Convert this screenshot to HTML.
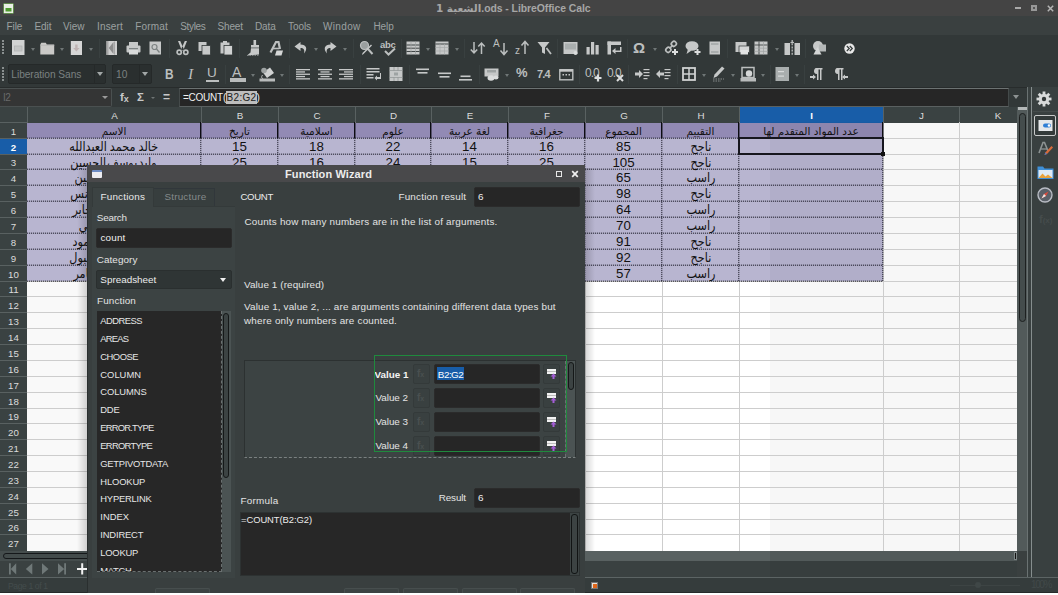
<!DOCTYPE html><html><head><meta charset="utf-8"><title>Function Wizard</title><style>
*{box-sizing:border-box;margin:0;padding:0}
html,body{width:1058px;height:595px;overflow:hidden;background:#fff}
body{font-family:"Liberation Sans","DejaVu Sans",sans-serif;font-size:10.3px;color:#d6d6d6;position:relative}
.a{position:absolute}
.t{position:absolute;white-space:nowrap;line-height:14px;height:14px}
.ar{font-family:"DejaVu Sans","Liberation Sans",sans-serif;direction:rtl}
.cell{position:absolute;white-space:nowrap;text-align:center;color:#111;line-height:16px;height:16px;overflow:hidden}
.num{font-family:"Liberation Sans",sans-serif;font-size:13.3px}
.ch{position:absolute;top:107px;height:16px;line-height:17px;text-align:center;color:#dcdcdc;font-size:9.8px;border-left:1px solid #596161}
.rh{position:absolute;left:0;width:27px;text-align:center;color:#dcdcdc;font-size:9.7px;border-top:1px solid #596161}
.dd{position:absolute;width:0;height:0;border-left:2.5px solid transparent;border-right:2.5px solid transparent;border-top:3px solid #8a8f8f}
.inp{position:absolute;background:#262626;border:1px solid #2b2b2b;border-radius:2px}
</style></head><body>
<div class="a" style="left:0;top:0;width:1058px;height:16px;background:#444444"></div>
<div class="t" style="left:436px;top:1px;font-weight:bold;font-size:10.4px;color:#a6a6a6;direction:ltr;letter-spacing:-0.05px"><span class="ar" style="direction:ltr">1 &#x627;&#x644;&#x634;&#x639;&#x628;&#x629;</span>.ods - LibreOffice Calc</div>
<svg class="a" style="left:3px;top:3px" width="11" height="11" viewBox="0 0 11 11"><rect x="0.5" y="0.5" width="10" height="10" rx="1" fill="#e8efe4" stroke="#5f8a4a"/><rect x="2.5" y="5" width="6" height="3.5" fill="#4e9a2e"/></svg>
<div class="a" style="left:1015px;top:7px;width:6px;height:2px;background:#a8a8a8"></div>
<div class="a" style="left:1031px;top:5px;width:6px;height:6px;border:2px solid #989898;background:#555"></div>
<svg class="a" style="left:1046.500px;top:4.500px" width="7" height="7" viewBox="0 0 7 7"><path d="M0.800 0.800L6.200 6.200M6.200 0.800L0.800 6.200" stroke="#b4b4b4" stroke-width="1.500"/></svg>
<div class="a" style="left:0;top:16px;width:1058px;height:20px;background:#3a4040"></div>
<div class="t" style="left:6.5px;top:19.93px;color:#9ca1a1;font-size:10px;letter-spacing:-0.08px;">File</div>
<div class="t" style="left:34.5px;top:19.93px;color:#9ca1a1;font-size:10px;letter-spacing:-0.06px;">Edit</div>
<div class="t" style="left:63px;top:19.93px;color:#9ca1a1;font-size:10px;letter-spacing:0.00px;">View</div>
<div class="t" style="left:97px;top:19.93px;color:#9ca1a1;font-size:10px;letter-spacing:0.16px;">Insert</div>
<div class="t" style="left:135.3px;top:19.93px;color:#9ca1a1;font-size:10px;letter-spacing:0.17px;">Format</div>
<div class="t" style="left:180.3px;top:19.93px;color:#9ca1a1;font-size:10px;letter-spacing:-0.36px;">Styles</div>
<div class="t" style="left:217.4px;top:19.93px;color:#9ca1a1;font-size:10px;letter-spacing:-0.11px;">Sheet</div>
<div class="t" style="left:255px;top:19.93px;color:#9ca1a1;font-size:10px;letter-spacing:-0.13px;">Data</div>
<div class="t" style="left:288px;top:19.93px;color:#9ca1a1;font-size:10px;letter-spacing:-0.07px;">Tools</div>
<div class="t" style="left:323px;top:19.93px;color:#9ca1a1;font-size:10px;letter-spacing:0.35px;">Window</div>
<div class="t" style="left:373.4px;top:19.93px;color:#9ca1a1;font-size:10px;letter-spacing:-0.04px;">Help</div>
<div class="a" style="left:0;top:35px;width:1058px;height:53px;background:#323838"></div>
<div class="a" style="left:0;top:87px;width:1058px;height:20px;background:#323838;border-top:1px solid #282c2c"></div>
<div class="a" style="left:2px;top:40px;width:2px;height:15px;background:repeating-linear-gradient(180deg,#8a9090 0 2px,transparent 2px 3px)"></div>
<div class="a" style="left:2px;top:67px;width:2px;height:15px;background:repeating-linear-gradient(180deg,#8a9090 0 2px,transparent 2px 3px)"></div>
<svg class="a" style="left:12px;top:40px" width="13" height="16" viewBox="0 0 13 16" fill="#c6c8c8"><rect x="0" y="0" width="12.500" height="15" fill="#d2d4d4"/><rect x="2.500" y="6" width="7.500" height="5" fill="#c4c6c6" stroke="#b2b5b5" stroke-width="0.800"/></svg>
<div class="dd" style="left:30.5px;top:48px;border-top-color:#6f7676"></div>
<svg class="a" style="left:40px;top:40px" width="15" height="16" viewBox="0 0 15 16" fill="#c6c8c8"><path d="M0.300 4.500l1-1.700h4.500l1 1.700h7.400v10H0.300z" fill="#cac9c7"/><path d="M0.300 5.300h14" stroke="#b4b3b1" stroke-width="0.700"/></svg>
<div class="dd" style="left:59.5px;top:48px;border-top-color:#6f7676"></div>
<svg class="a" style="left:70px;top:40px" width="13" height="16" viewBox="0 0 13 16" fill="#c6c8c8"><rect x="0.800" y="1" width="11.200" height="14" fill="#d6d6d6"/><path d="M5.200 4.500h2.400v3.500h2L6.400 11.500 3.200 8h2z" fill="#beb2b2"/></svg>
<div class="dd" style="left:88.5px;top:48px;border-top-color:#6f7676"></div>
<div class="a" style="left:99px;top:39px;width:1px;height:19px;background:#394040"></div>
<svg class="a" style="left:105px;top:40px" width="13" height="16" viewBox="0 0 13 16" fill="#c6c8c8"><rect x="1.500" y="1" width="10.500" height="14" fill="#d0d0d0"/><path d="M1.500 1h2v14h-2z" fill="#a8a8a8"/><path d="M8.500 2L3.800 8l4.700 6z" fill="#8d8d8d"/><path d="M9.500 1.500v13" stroke="#9a9a9a" stroke-width="0.800"/></svg>
<svg class="a" style="left:126px;top:40px" width="15" height="16" viewBox="0 0 15 16" fill="#c6c8c8"><rect x="3" y="2" width="9" height="4"/><rect x="0.500" y="5.500" width="14" height="7" rx="1"/><rect x="3" y="10" width="9" height="4.500" fill="#d8dada"/><rect x="3" y="8" width="9" height="1.200" fill="#7d8383"/></svg>
<svg class="a" style="left:149px;top:40px" width="13" height="16" viewBox="0 0 13 16" fill="#c6c8c8"><rect x="0.500" y="1.500" width="11.500" height="13"/><circle cx="5.500" cy="7" r="2.500" fill="none" stroke="#7d8383" stroke-width="1.200"/><path d="M7.500 9l3 3.500" stroke="#7d8383" stroke-width="1.300"/></svg>
<div class="a" style="left:169px;top:39px;width:1px;height:19px;background:#394040"></div>
<svg class="a" style="left:176px;top:40px" width="13" height="16" viewBox="0 0 13 16" fill="#c6c8c8"><path d="M2 1h2.200L8 9.500 6 11zM11 1H8.800L5 9.500 7 11z"/><circle cx="3.200" cy="12.200" r="2.100" fill="none" stroke="#bcbfbf" stroke-width="1.700"/><circle cx="9.800" cy="12.200" r="2.100" fill="none" stroke="#bcbfbf" stroke-width="1.700"/></svg>
<svg class="a" style="left:198px;top:40px" width="13" height="16" viewBox="0 0 13 16" fill="#c6c8c8"><rect x="0.500" y="2" width="8" height="9"/><rect x="4" y="5.500" width="8.500" height="9.500" stroke="#323838" stroke-width="0.800"/></svg>
<svg class="a" style="left:220px;top:40px" width="13" height="16" viewBox="0 0 13 16" fill="#c6c8c8"><rect x="0.500" y="2.500" width="9" height="11"/><rect x="3" y="1" width="4" height="2.500"/><rect x="4" y="5.500" width="8.500" height="9.500" stroke="#323838" stroke-width="0.800" fill="#d0d2d2"/></svg>
<div class="a" style="left:239px;top:39px;width:1px;height:19px;background:#394040"></div>
<svg class="a" style="left:246px;top:40px" width="14" height="16" viewBox="0 0 14 16" fill="#c6c8c8"><rect x="7.500" y="0" width="2.600" height="5.500"/><rect x="5" y="5" width="8" height="2.600"/><path d="M5 8.200h8v6.300l-12 1 3.500-3z"/><path d="M1 15.500h12" stroke="#8a8f8f" stroke-width="0.800" stroke-dasharray="1.500 1"/></svg>
<svg class="a" style="left:268px;top:40px" width="16" height="16" viewBox="0 0 16 16" fill="#c6c8c8"><path d="M2.500 12.500L8 2h2.500l1.500 7" stroke="#bcbfbf" stroke-width="2.200" fill="none"/><path d="M5 8.500h6" stroke="#bcbfbf" stroke-width="1.600"/><path d="M8.500 10.500h6.500l-1.500 5H7z" fill="#d4d6d6"/></svg>
<div class="a" style="left:289px;top:39px;width:1px;height:19px;background:#394040"></div>
<svg class="a" style="left:294px;top:40px" width="14" height="16" viewBox="0 0 14 16" fill="#c6c8c8"><path d="M6.500 2L0.500 6.500l6 4.500V8c3 0 4.500 1.500 3.500 5.500 4-4.500 2.500-9-3.500-9z"/></svg>
<div class="dd" style="left:313.5px;top:48px;border-top-color:#6f7676"></div>
<svg class="a" style="left:323px;top:40px" width="14" height="16" viewBox="0 0 14 16" fill="#c6c8c8"><path d="M7.500 2l6 4.500-6 4.500V8c-3 0-4.500 1.500-3.500 5.500-4-4.500-2.500-9 3.500-9z"/></svg>
<div class="dd" style="left:342.5px;top:48px;border-top-color:#6f7676"></div>
<div class="a" style="left:353px;top:39px;width:1px;height:19px;background:#394040"></div>
<svg class="a" style="left:359px;top:40px" width="16" height="16" viewBox="0 0 16 16" fill="#c6c8c8"><circle cx="5.500" cy="5.500" r="4" fill="#9a9f9f" stroke="#bcbfbf" stroke-width="1.200"/><path d="M8.500 8.500l5 5.500" stroke="#bcbfbf" stroke-width="2"/><path d="M13 5.500L4.500 14l-1.500 1 0.500-2L12 4.500z"/></svg>
<div class="t" style="left:380px;top:38px;font-size:9.5px;font-weight:bold;color:#bcbfbf;letter-spacing:-0.3px">abc</div>
<svg class="a" style="left:384px;top:48px" width="12" height="8" viewBox="0 0 12 8" fill="#c6c8c8"><path d="M1 3l3.500 3.500L11 0.500" stroke="#bcbfbf" stroke-width="2" fill="none"/></svg>
<div class="a" style="left:401px;top:39px;width:1px;height:19px;background:#394040"></div>
<svg class="a" style="left:406px;top:40px" width="14" height="16" viewBox="0 0 14 16" fill="#c6c8c8"><rect x="0.500" y="1.500" width="13" height="13"/><path d="M0.500 5h13M0.500 8.200h13M0.500 11.500h13" stroke="#323838" stroke-width="0.900"/><path d="M5 1.500v13M9.500 1.500v13" stroke="#9da2a2" stroke-width="0.700"/></svg>
<div class="dd" style="left:425.5px;top:48px;border-top-color:#6f7676"></div>
<svg class="a" style="left:435px;top:40px" width="14" height="16" viewBox="0 0 14 16" fill="#c6c8c8"><rect x="0.500" y="1.500" width="13" height="13"/><path d="M0.500 4h13" stroke="#323838" stroke-width="0.900"/><path d="M5 4v10.500M9.500 4v10.500M0.500 7.500h13M0.500 11h13" stroke="#a6abab" stroke-width="0.700"/></svg>
<div class="dd" style="left:454.5px;top:48px;border-top-color:#6f7676"></div>
<div class="a" style="left:464px;top:39px;width:1px;height:19px;background:#394040"></div>
<svg class="a" style="left:470px;top:40px" width="16" height="16" viewBox="0 0 16 16" fill="#c6c8c8"><path d="M4 2v11M0.800 9.500L4 13l3.200-3.500M11.500 14V3M8.300 6.500L11.500 3l3.200 3.500" stroke="#bcbfbf" stroke-width="1.500" fill="none"/></svg>
<div class="t" style="left:493px;top:37px;font-size:10px;color:#bcbfbf">A</div>
<svg class="a" style="left:499px;top:42px" width="10" height="14" viewBox="0 0 10 14" fill="#c6c8c8"><path d="M5 1v11M1.500 8.500L5 12.500l3.500-4" stroke="#bcbfbf" stroke-width="1.500" fill="none"/></svg>
<div class="t" style="left:515px;top:44px;font-size:10px;color:#bcbfbf">z</div>
<svg class="a" style="left:520px;top:40px" width="10" height="15" viewBox="0 0 10 15" fill="#c6c8c8"><path d="M5 14V2M1.500 5.500L5 1.500l3.500 4" stroke="#bcbfbf" stroke-width="1.500" fill="none"/></svg>
<svg class="a" style="left:537px;top:40px" width="15" height="16" viewBox="0 0 15 16" fill="#c6c8c8"><path d="M0.500 2h12l-4.500 5.500V14l-3-1.500V7.500z"/><path d="M9.500 8l4.500 6" stroke="#bcbfbf" stroke-width="1.800"/></svg>
<div class="a" style="left:557px;top:39px;width:1px;height:19px;background:#394040"></div>
<svg class="a" style="left:563px;top:40px" width="15" height="16" viewBox="0 0 15 16" fill="#c6c8c8"><rect x="0.500" y="2" width="14" height="12"/><rect x="2" y="3.500" width="11" height="6" fill="#a9aeae"/><circle cx="12.500" cy="13" r="2" fill="#dadcdc"/></svg>
<svg class="a" style="left:586px;top:40px" width="14" height="16" viewBox="0 0 14 16" fill="#c6c8c8"><rect x="0.500" y="7" width="3.200" height="7.500"/><rect x="5" y="2" width="3.200" height="12.500"/><rect x="9.500" y="5" width="3.200" height="9.500"/></svg>
<svg class="a" style="left:607px;top:40px" width="15" height="16" viewBox="0 0 15 16" fill="#c6c8c8"><rect x="0.500" y="1.500" width="13.500" height="3.500"/><rect x="0.500" y="1.500" width="3.500" height="13"/><path d="M13 7v3.500H8.500V8L5 11l3.500 3v-2h6V7z"/></svg>
<div class="a" style="left:627px;top:39px;width:1px;height:19px;background:#394040"></div>
<div class="t" style="left:633px;top:39px;font-size:15px;font-weight:bold;color:#bcbfbf;line-height:18px;height:18px">&Omega;</div>
<div class="dd" style="left:652.5px;top:48px;border-top-color:#6f7676"></div>
<svg class="a" style="left:664px;top:40px" width="16" height="16" viewBox="0 0 16 16" fill="#c6c8c8"><g fill="none" stroke="#bcbfbf" stroke-width="1.700"><rect x="7.500" y="1.500" width="5" height="4.500" rx="2" transform="rotate(-45 10 4)"/><rect x="2" y="7.500" width="5" height="4.500" rx="2" transform="rotate(-45 4.500 10)"/><path d="M5.500 8.500l3.500-3.500"/></g><path d="M11 9v6M8 12h6" stroke="#dcdede" stroke-width="2"/></svg>
<svg class="a" style="left:685px;top:40px" width="16" height="16" viewBox="0 0 16 16" fill="#c6c8c8"><ellipse cx="7" cy="6" rx="6.500" ry="4.800"/><path d="M3 9l-1.500 5 5-3.500z"/><path d="M12.500 9v6M9.500 12h6" stroke="#dcdede" stroke-width="2"/></svg>
<svg class="a" style="left:709px;top:40px" width="12" height="16" viewBox="0 0 12 16" fill="#c6c8c8"><rect x="0.500" y="1.500" width="10.500" height="13"/><path d="M2 4h7.500M2 12h7.500" stroke="#8e9393" stroke-width="1.200"/></svg>
<div class="a" style="left:727px;top:39px;width:1px;height:19px;background:#394040"></div>
<svg class="a" style="left:735px;top:40px" width="15" height="16" viewBox="0 0 15 16" fill="#c6c8c8"><rect x="0.500" y="2" width="11" height="10"/><rect x="4" y="6" width="10.500" height="6.500" fill="#d4d6d6" stroke="#323838" stroke-width="0.700"/><rect x="5.500" y="10" width="7.500" height="4.500" fill="#e2e4e4"/></svg>
<svg class="a" style="left:754px;top:40px" width="14" height="16" viewBox="0 0 14 16" fill="#c6c8c8"><rect x="0.500" y="1.500" width="13" height="13"/><path d="M0.500 5h13M5 1.500v13" stroke="#323838" stroke-width="0.800"/><path d="M0.500 8.200h13M0.500 11.400h13M9.500 1.500v13" stroke="#9da2a2" stroke-width="0.700"/></svg>
<div class="dd" style="left:774.5px;top:48px;border-top-color:#6f7676"></div>
<svg class="a" style="left:784px;top:39px" width="17" height="17" viewBox="0 0 17 17" fill="#c6c8c8"><rect x="0.500" y="4" width="5.500" height="12"/><rect x="10.500" y="4" width="5.500" height="12"/><path d="M8.200 1v16" stroke="#bcbfbf" stroke-width="1.300" stroke-dasharray="2 1.200"/><path d="M6.500 3.500h3.500" stroke="#bcbfbf" stroke-width="1.200"/></svg>
<div class="a" style="left:805px;top:39px;width:1px;height:19px;background:#394040"></div>
<svg class="a" style="left:812px;top:40px" width="15" height="16" viewBox="0 0 15 16" fill="#c6c8c8"><circle cx="6" cy="6" r="5"/><rect x="7" y="4.500" width="7" height="7" fill="#b4b8b8"/><path d="M5.500 7l4 7.500h-8z" fill="#d4d6d6"/></svg>
<svg class="a" style="left:844px;top:43px" width="11" height="11" viewBox="0 0 11 11" fill="#c6c8c8"><circle cx="5.500" cy="5.500" r="5.200" fill="#e8e8e8"/><path d="M2.800 3l2.500 2.500L2.800 8M5.800 3l2.500 2.500L5.800 8" stroke="#323838" stroke-width="1.200" fill="none"/></svg>
<div class="a" style="left:8px;top:64px;width:98px;height:20px;background:#2a2f2f;border:1px solid #252929;border-radius:2px"></div>
<div class="a" style="left:94px;top:65px;width:1px;height:18px;background:#252929"></div>
<div class="t" style="left:11.300px;top:67.500px;color:#7b8181;font-size:10.200px;letter-spacing:-0.050px">Liberation Sans</div>
<div class="dd" style="left:96.500px;top:72px;border-left-width:3.500px;border-right-width:3.500px;border-top-width:4px;border-top-color:#a2a7a7"></div>
<div class="a" style="left:112px;top:64px;width:40px;height:20px;background:#2a2f2f;border:1px solid #252929;border-radius:2px"></div>
<div class="a" style="left:139px;top:65px;width:1px;height:18px;background:#252929"></div>
<div class="t" style="left:116px;top:67.500px;color:#7b8181;font-size:10.200px">10</div>
<div class="dd" style="left:141.500px;top:72px;border-left-width:3.500px;border-right-width:3.500px;border-top-width:4px;border-top-color:#a2a7a7"></div>
<div class="t" style="left:165px;top:64.500px;font-size:14.500px;font-weight:bold;color:#bcbfbf;line-height:18px;height:18px;transform:scaleX(0.82);transform-origin:0 0">B</div>
<div class="t" style="left:188px;top:64.500px;font-size:15.500px;font-style:italic;font-family:'Liberation Serif',serif;color:#bcbfbf;line-height:18px;height:18px">I</div>
<div class="t" style="left:207px;top:64px;font-size:13.500px;color:#bcbfbf;line-height:18px;height:18px">U</div>
<div class="a" style="left:206px;top:80px;width:13px;height:1.500px;background:#bcbfbf"></div>
<div class="a" style="left:225px;top:65px;width:1px;height:19px;background:#394040"></div>
<div class="t" style="left:232px;top:63px;font-size:14px;color:#bcbfbf;line-height:18px;height:18px">A</div>
<div class="a" style="left:230px;top:78px;width:16px;height:3.500px;background:#b9bcbc"></div>
<div class="dd" style="left:250.5px;top:74px;border-top-color:#6f7676"></div>
<svg class="a" style="left:259px;top:66px" width="17" height="16" viewBox="0 0 17 16" fill="#c6c8c8"><path d="M4 6.500l7-5 4 5.500-7 5z" fill="#d0d2d2"/><circle cx="5" cy="4.500" r="2.800" fill="#9ea3a3"/><path d="M3.500 9c-1.500 2-1 3.500 0.500 3.500" fill="none" stroke="#bcbfbf"/><rect x="0.500" y="12.500" width="15.500" height="3" fill="#b9bcbc"/></svg>
<div class="dd" style="left:280.0px;top:74px;border-top-color:#6f7676"></div>
<div class="a" style="left:289px;top:65px;width:1px;height:19px;background:#394040"></div>
<svg class="a" style="left:296px;top:69px" width="14" height="11.5" viewBox="0 0 14 11.5" fill="#c6c8c8"><rect x="0" y="0.0" width="14" height="1.3"/><rect x="0" y="2.3" width="9" height="1.3"/><rect x="0" y="4.6" width="14" height="1.3"/><rect x="0" y="6.8999999999999995" width="9" height="1.3"/><rect x="0" y="9.2" width="14" height="1.3"/></svg>
<svg class="a" style="left:318px;top:69px" width="14" height="11.5" viewBox="0 0 14 11.5" fill="#c6c8c8"><rect x="0.0" y="0.0" width="14" height="1.3"/><rect x="2.5" y="2.3" width="9" height="1.3"/><rect x="0.0" y="4.6" width="14" height="1.3"/><rect x="2.5" y="6.8999999999999995" width="9" height="1.3"/><rect x="0.0" y="9.2" width="14" height="1.3"/></svg>
<svg class="a" style="left:339px;top:69px" width="14" height="11.5" viewBox="0 0 14 11.5" fill="#c6c8c8"><rect x="0" y="0.0" width="14" height="1.3"/><rect x="5" y="2.3" width="9" height="1.3"/><rect x="0" y="4.6" width="14" height="1.3"/><rect x="5" y="6.8999999999999995" width="9" height="1.3"/><rect x="0" y="9.2" width="14" height="1.3"/></svg>
<div class="a" style="left:360px;top:65px;width:1px;height:19px;background:#394040"></div>
<svg class="a" style="left:366px;top:67px" width="15" height="14" viewBox="0 0 15 14" fill="#c6c8c8"><rect x="0.500" y="1" width="13" height="1.500"/><rect x="0.500" y="4" width="13" height="1.500"/><rect x="0.500" y="7" width="7" height="1.500"/><rect x="0.500" y="10" width="7" height="1.500"/><path d="M14 6v4h-3V8.500L8.500 11l2.500 2.500V12h4.500V6z"/></svg>
<svg class="a" style="left:389px;top:66px" width="14" height="16" viewBox="0 0 14 16" fill="#c6c8c8"><rect x="0.500" y="1" width="13" height="14"/><path d="M0.500 4.500h13M0.500 11.500h13M5 1v3.500M9 1v3.500M5 11.500V15M9 11.500V15" stroke="#8e9393" stroke-width="0.700"/><rect x="5" y="6.500" width="4" height="3" fill="#9ea3a3"/></svg>
<div class="a" style="left:409px;top:65px;width:1px;height:19px;background:#394040"></div>
<svg class="a" style="left:416px;top:68px" width="14" height="8" viewBox="0 0 14 8" fill="#c6c8c8"><rect x="0" y="0.500" width="13" height="1.600"/><rect x="1.500" y="4" width="10" height="1.600"/></svg>
<svg class="a" style="left:438px;top:72px" width="14" height="8" viewBox="0 0 14 8" fill="#c6c8c8"><rect x="0" y="0.500" width="13" height="1.600"/><rect x="1.500" y="4" width="10" height="1.600"/></svg>
<svg class="a" style="left:459px;top:75px" width="14" height="8" viewBox="0 0 14 8" fill="#c6c8c8"><rect x="1.500" y="0.500" width="10" height="1.600"/><rect x="0" y="4" width="13" height="1.600"/></svg>
<div class="a" style="left:479px;top:65px;width:1px;height:19px;background:#394040"></div>
<svg class="a" style="left:484px;top:66px" width="16" height="16" viewBox="0 0 16 16" fill="#c6c8c8"><rect x="0.500" y="2.500" width="14" height="8"/><rect x="3" y="4" width="9" height="2.500" fill="#9ea3a3"/><ellipse cx="7" cy="12" rx="3.500" ry="2.800" fill="#dadcdc"/><ellipse cx="12" cy="11.500" rx="2.500" ry="2" fill="#dadcdc"/></svg>
<div class="dd" style="left:504.5px;top:74px;border-top-color:#6f7676"></div>
<div class="t" style="left:516px;top:64px;font-size:13px;font-weight:bold;color:#bcbfbf;line-height:18px;height:18px;letter-spacing:-0.500px">%</div>
<div class="t" style="left:537px;top:65px;font-size:11px;font-weight:bold;color:#bcbfbf;line-height:18px;height:18px;letter-spacing:-0.800px">7.4</div>
<svg class="a" style="left:559px;top:68px" width="15" height="13" viewBox="0 0 15 13" fill="#c6c8c8"><rect x="0.800" y="1.800" width="13" height="10" fill="none" stroke="#bcbfbf" stroke-width="1.400"/><rect x="0.800" y="1.200" width="13" height="2.500"/><rect x="3.500" y="6" width="1.500" height="1.500"/><rect x="6.500" y="6" width="1.500" height="1.500"/><rect x="9.500" y="6" width="1.500" height="1.500"/></svg>
<div class="a" style="left:579px;top:65px;width:1px;height:19px;background:#394040"></div>
<div class="t" style="left:585px;top:64px;font-size:12px;color:#bcbfbf;line-height:18px;height:18px;letter-spacing:-1px">0.0</div>
<svg class="a" style="left:594px;top:74px" width="8" height="8" viewBox="0 0 8 8" fill="#c6c8c8"><path d="M4 0.500v7M0.500 4h7" stroke="#dcdede" stroke-width="2.200"/></svg>
<div class="t" style="left:607px;top:64px;font-size:12px;color:#bcbfbf;line-height:18px;height:18px;letter-spacing:-1px">0.0</div>
<svg class="a" style="left:616px;top:74px" width="8" height="8" viewBox="0 0 8 8" fill="#c6c8c8"><path d="M1 1l6 6M7 1L1 7" stroke="#dcdede" stroke-width="2"/></svg>
<div class="a" style="left:628px;top:65px;width:1px;height:19px;background:#394040"></div>
<svg class="a" style="left:635px;top:68px" width="15" height="12" viewBox="0 0 15 12" fill="#c6c8c8"><path d="M0 4.500h4V2l4 4-4 4V7.500H0z"/><rect x="8.500" y="1" width="6" height="1.200"/><rect x="8.500" y="4" width="6" height="1.200"/><rect x="8.500" y="7" width="6" height="1.200"/><rect x="8.500" y="10" width="4" height="1.200"/></svg>
<svg class="a" style="left:656px;top:68px" width="15" height="12" viewBox="0 0 15 12" fill="#c6c8c8"><path d="M8 4.500H4V2L0 6l4 4V7.500h4z"/><rect x="8.500" y="1" width="6" height="1.200"/><rect x="8.500" y="4" width="6" height="1.200"/><rect x="8.500" y="7" width="6" height="1.200"/><rect x="8.500" y="10" width="4" height="1.200"/></svg>
<div class="a" style="left:677px;top:65px;width:1px;height:19px;background:#394040"></div>
<svg class="a" style="left:682px;top:67px" width="14" height="14" viewBox="0 0 14 14" fill="#c6c8c8"><rect x="1" y="1" width="12" height="12" fill="none" stroke="#d0d2d2" stroke-width="1.800"/><path d="M7 1v12M1 7h12" stroke="#d0d2d2" stroke-width="1.500"/></svg>
<div class="dd" style="left:701.5px;top:74px;border-top-color:#6f7676"></div>
<svg class="a" style="left:712px;top:66px" width="13" height="16" viewBox="0 0 13 16" fill="#c6c8c8"><path d="M10 0.500l2.500 2L5 10.500l-3.500 1.500 1-3.500z"/><path d="M1 13h11M1 15h8" stroke="#9ea3a3" stroke-width="0.800" stroke-dasharray="1.500 1"/></svg>
<div class="dd" style="left:731.0px;top:74px;border-top-color:#6f7676"></div>
<svg class="a" style="left:740px;top:66px" width="16" height="16" viewBox="0 0 16 16" fill="#c6c8c8"><rect x="2" y="1.500" width="12" height="10" fill="none" stroke="#bcbfbf" stroke-width="1.500"/><circle cx="9" cy="7.500" r="3.200" fill="#d4d6d6"/><rect x="0.500" y="12" width="15.500" height="3.500" fill="#b9bcbc"/></svg>
<div class="dd" style="left:760.5px;top:74px;border-top-color:#6f7676"></div>
<div class="a" style="left:770px;top:65px;width:1px;height:19px;background:#394040"></div>
<svg class="a" style="left:775px;top:66px" width="14" height="16" viewBox="0 0 14 16" fill="#c6c8c8"><rect x="0.500" y="1" width="13.500" height="14" fill="#a9aeae"/><rect x="3" y="5" width="6" height="1.200" fill="#d8dada"/><rect x="3" y="9.500" width="6" height="1.200" fill="#d8dada"/></svg>
<div class="dd" style="left:794.5px;top:74px;border-top-color:#6f7676"></div>
<div class="a" style="left:804px;top:65px;width:1px;height:19px;background:#394040"></div>
<svg class="a" style="left:810px;top:67px" width="13" height="14" viewBox="0 0 13 14" fill="#c6c8c8"><path d="M6 1h6.500v1.500H11.500V13H10V2.500H8.500V13H7V7C4.500 7 4 5.500 4 4s1-3 2-3z"/><path d="M0 9h3V7.500L6 10l-3 2.500V11H0z"/></svg>
<svg class="a" style="left:834px;top:67px" width="14" height="14" viewBox="0 0 14 14" fill="#c6c8c8"><path d="M3 1h6.500v1.500H8.500V13H7V2.500H5.500V13H4V7C1.500 7 1 5.500 1 4s1-3 2-3z"/><path d="M14 9h-3V7.500L8 10l3 2.500V11h3z"/></svg>
<div class="a" style="left:0;top:88px;width:112px;height:19px;background:#343535;border:1px solid #4a5050;border-left:none;border-radius:0 2px 2px 0"></div>
<div class="t" style="left:3px;top:91.03px;color:#6a6a6a;font-size:10px;letter-spacing:-0.42px;">I2</div>
<div class="dd" style="left:101.5px;top:96px;border-left-width:3px;border-right-width:3px;border-top-width:3.5px;border-top-color:#9a9a9a"></div>
<div class="t" style="left:120px;top:90px;color:#c8c8c8;font-weight:bold;font-size:11.5px">f<span style="font-size:9px;vertical-align:-1px">x</span></div>
<div class="t" style="left:137px;top:90px;color:#c8c8c8;font-weight:bold;font-size:11.5px">&Sigma;</div>
<div class="dd" style="left:151px;top:97px;border-left-width:2px;border-right-width:2px;border-top-width:2.5px;border-top-color:#6f7575"></div>
<div class="t" style="left:163px;top:90px;color:#c8c8c8;font-weight:bold;font-size:12px">=</div>
<div class="a" style="left:179px;top:88px;width:830px;height:19px;background:#262626;border:1px solid #444a4a;border-top-color:#6c7272;border-bottom-color:#5a6060"></div>
<div class="a" style="left:226px;top:91px;width:31px;height:13px;background:#bdbdbd"></div>
<div class="t" style="left:183px;top:91.03px;color:#f0f0f0;font-size:10px;letter-spacing:-0.25px;">=COUNT(</div>
<div class="t" style="left:226.5px;top:91.03px;color:#202020;font-size:10px;letter-spacing:0.33px;">B2:G2</div>
<div class="t" style="left:256.5px;top:91.03px;color:#f0f0f0;font-size:10px;">)</div>
<div class="dd" style="left:1013px;top:95px;border-left-width:3.5px;border-right-width:3.5px;border-top-width:4px;border-top-color:#8d9292"></div>
<div class="a" style="left:27px;top:122px;width:990px;height:429px;background:#ffffff"></div>
<div class="a" style="left:770px;top:122px;width:247px;height:429px;background:#f7f7f7"></div>
<div class="a" style="left:27px;top:122px;width:61px;height:429px;background:#f9f9f9"></div>
<div class="a" style="left:0;top:107px;width:1017px;height:16px;background:#3a4242;overflow:hidden">
<div class="a" style="left:739px;top:0;width:144px;height:16px;background:#185da8"></div>
<div class="ch" style="top:0;left:27px;width:174px;">A</div>
<div class="ch" style="top:0;left:201px;width:77px;">B</div>
<div class="ch" style="top:0;left:278px;width:77px;">C</div>
<div class="ch" style="top:0;left:355px;width:76px;">D</div>
<div class="ch" style="top:0;left:431px;width:77px;">E</div>
<div class="ch" style="top:0;left:508px;width:77px;">F</div>
<div class="ch" style="top:0;left:585px;width:77px;">G</div>
<div class="ch" style="top:0;left:662px;width:77px;">H</div>
<div class="ch" style="top:0;left:739px;width:144px;font-weight:bold;color:#fff;">I</div>
<div class="ch" style="top:0;left:883px;width:76px;">J</div>
<div class="ch" style="top:0;left:959px;width:77px;">K</div>
</div>
<div class="a" style="left:0;top:122px;width:27px;height:429px;background:#3a4242"></div>
<div class="a" style="left:0;top:138px;width:27px;height:16px;background:#185da8"></div>
<div class="rh" style="top:122px;height:16px;line-height:17px;">1</div>
<div class="rh" style="top:138px;height:16px;line-height:17px;font-weight:bold;color:#fff;">2</div>
<div class="rh" style="top:154px;height:15px;line-height:16px;">3</div>
<div class="rh" style="top:169px;height:16px;line-height:17px;">4</div>
<div class="rh" style="top:185px;height:16px;line-height:17px;">5</div>
<div class="rh" style="top:201px;height:16px;line-height:17px;">6</div>
<div class="rh" style="top:217px;height:16px;line-height:17px;">7</div>
<div class="rh" style="top:233px;height:16px;line-height:17px;">8</div>
<div class="rh" style="top:249px;height:16px;line-height:17px;">9</div>
<div class="rh" style="top:265px;height:16px;line-height:17px;">10</div>
<div class="rh" style="top:281px;height:15px;line-height:16px;">11</div>
<div class="rh" style="top:296px;height:16px;line-height:17px;">12</div>
<div class="rh" style="top:312px;height:16px;line-height:17px;">13</div>
<div class="rh" style="top:328px;height:16px;line-height:17px;">14</div>
<div class="rh" style="top:344px;height:16px;line-height:17px;">15</div>
<div class="rh" style="top:360px;height:16px;line-height:17px;">16</div>
<div class="rh" style="top:376px;height:16px;line-height:17px;">17</div>
<div class="rh" style="top:392px;height:16px;line-height:17px;">18</div>
<div class="rh" style="top:408px;height:15px;line-height:16px;">19</div>
<div class="rh" style="top:423px;height:16px;line-height:17px;">20</div>
<div class="rh" style="top:439px;height:16px;line-height:17px;">21</div>
<div class="rh" style="top:455px;height:16px;line-height:17px;">22</div>
<div class="rh" style="top:471px;height:16px;line-height:17px;">23</div>
<div class="rh" style="top:487px;height:16px;line-height:17px;">24</div>
<div class="rh" style="top:503px;height:16px;line-height:17px;">25</div>
<div class="rh" style="top:519px;height:15px;line-height:16px;">26</div>
<div class="rh" style="top:534px;height:16px;line-height:17px;">27</div>
<div class="a" style="left:27px;top:138px;width:990px;height:1px;background:#cdcdcd"></div>
<div class="a" style="left:27px;top:154px;width:990px;height:1px;background:#cdcdcd"></div>
<div class="a" style="left:27px;top:169px;width:990px;height:1px;background:#cdcdcd"></div>
<div class="a" style="left:27px;top:185px;width:990px;height:1px;background:#cdcdcd"></div>
<div class="a" style="left:27px;top:201px;width:990px;height:1px;background:#cdcdcd"></div>
<div class="a" style="left:27px;top:217px;width:990px;height:1px;background:#cdcdcd"></div>
<div class="a" style="left:27px;top:233px;width:990px;height:1px;background:#cdcdcd"></div>
<div class="a" style="left:27px;top:249px;width:990px;height:1px;background:#cdcdcd"></div>
<div class="a" style="left:27px;top:265px;width:990px;height:1px;background:#cdcdcd"></div>
<div class="a" style="left:27px;top:281px;width:990px;height:1px;background:#cdcdcd"></div>
<div class="a" style="left:27px;top:296px;width:990px;height:1px;background:#cdcdcd"></div>
<div class="a" style="left:27px;top:312px;width:990px;height:1px;background:#cdcdcd"></div>
<div class="a" style="left:27px;top:328px;width:990px;height:1px;background:#cdcdcd"></div>
<div class="a" style="left:27px;top:344px;width:990px;height:1px;background:#cdcdcd"></div>
<div class="a" style="left:27px;top:360px;width:990px;height:1px;background:#cdcdcd"></div>
<div class="a" style="left:27px;top:376px;width:990px;height:1px;background:#cdcdcd"></div>
<div class="a" style="left:27px;top:392px;width:990px;height:1px;background:#cdcdcd"></div>
<div class="a" style="left:27px;top:408px;width:990px;height:1px;background:#cdcdcd"></div>
<div class="a" style="left:27px;top:423px;width:990px;height:1px;background:#cdcdcd"></div>
<div class="a" style="left:27px;top:439px;width:990px;height:1px;background:#cdcdcd"></div>
<div class="a" style="left:27px;top:455px;width:990px;height:1px;background:#cdcdcd"></div>
<div class="a" style="left:27px;top:471px;width:990px;height:1px;background:#cdcdcd"></div>
<div class="a" style="left:27px;top:487px;width:990px;height:1px;background:#cdcdcd"></div>
<div class="a" style="left:27px;top:503px;width:990px;height:1px;background:#cdcdcd"></div>
<div class="a" style="left:27px;top:519px;width:990px;height:1px;background:#cdcdcd"></div>
<div class="a" style="left:27px;top:534px;width:990px;height:1px;background:#cdcdcd"></div>
<div class="a" style="left:201px;top:122px;width:1px;height:429px;background:#cdcdcd"></div>
<div class="a" style="left:278px;top:122px;width:1px;height:429px;background:#cdcdcd"></div>
<div class="a" style="left:355px;top:122px;width:1px;height:429px;background:#cdcdcd"></div>
<div class="a" style="left:431px;top:122px;width:1px;height:429px;background:#cdcdcd"></div>
<div class="a" style="left:508px;top:122px;width:1px;height:429px;background:#cdcdcd"></div>
<div class="a" style="left:585px;top:122px;width:1px;height:429px;background:#cdcdcd"></div>
<div class="a" style="left:662px;top:122px;width:1px;height:429px;background:#cdcdcd"></div>
<div class="a" style="left:739px;top:122px;width:1px;height:429px;background:#cdcdcd"></div>
<div class="a" style="left:883px;top:122px;width:1px;height:429px;background:#cdcdcd"></div>
<div class="a" style="left:959px;top:122px;width:1px;height:429px;background:#cdcdcd"></div>
<div class="a" style="left:27px;top:123px;width:856px;height:15px;background:#928ab4"></div>
<div class="a" style="left:27px;top:138px;width:856px;height:143px;background:#b8b5d0"></div>
<div class="a" style="left:770px;top:122px;width:113px;height:159px;background:rgba(20,20,60,0.04)"></div>
<div class="a" style="left:27px;top:138px;width:856px;height:1px;background:repeating-linear-gradient(90deg,rgba(8,8,20,.6) 0 1px,rgba(8,8,20,.1) 1px 2px)"></div><div class="a" style="left:27px;top:137px;width:856px;height:1px;background:repeating-linear-gradient(90deg,rgba(8,8,20,.3) 0 1px,rgba(8,8,20,.05) 1px 2px)"></div>
<div class="a" style="left:27px;top:154px;width:856px;height:1px;background:repeating-linear-gradient(90deg,rgba(8,8,20,.6) 0 1px,rgba(8,8,20,.1) 1px 2px)"></div><div class="a" style="left:27px;top:153px;width:856px;height:1px;background:repeating-linear-gradient(90deg,rgba(8,8,20,.3) 0 1px,rgba(8,8,20,.05) 1px 2px)"></div>
<div class="a" style="left:27px;top:169px;width:856px;height:1px;background:repeating-linear-gradient(90deg,rgba(8,8,20,.6) 0 1px,rgba(8,8,20,.1) 1px 2px)"></div><div class="a" style="left:27px;top:168px;width:856px;height:1px;background:repeating-linear-gradient(90deg,rgba(8,8,20,.3) 0 1px,rgba(8,8,20,.05) 1px 2px)"></div>
<div class="a" style="left:27px;top:185px;width:856px;height:1px;background:repeating-linear-gradient(90deg,rgba(8,8,20,.6) 0 1px,rgba(8,8,20,.1) 1px 2px)"></div><div class="a" style="left:27px;top:184px;width:856px;height:1px;background:repeating-linear-gradient(90deg,rgba(8,8,20,.3) 0 1px,rgba(8,8,20,.05) 1px 2px)"></div>
<div class="a" style="left:27px;top:201px;width:856px;height:1px;background:repeating-linear-gradient(90deg,rgba(8,8,20,.6) 0 1px,rgba(8,8,20,.1) 1px 2px)"></div><div class="a" style="left:27px;top:200px;width:856px;height:1px;background:repeating-linear-gradient(90deg,rgba(8,8,20,.3) 0 1px,rgba(8,8,20,.05) 1px 2px)"></div>
<div class="a" style="left:27px;top:217px;width:856px;height:1px;background:repeating-linear-gradient(90deg,rgba(8,8,20,.6) 0 1px,rgba(8,8,20,.1) 1px 2px)"></div><div class="a" style="left:27px;top:216px;width:856px;height:1px;background:repeating-linear-gradient(90deg,rgba(8,8,20,.3) 0 1px,rgba(8,8,20,.05) 1px 2px)"></div>
<div class="a" style="left:27px;top:233px;width:856px;height:1px;background:repeating-linear-gradient(90deg,rgba(8,8,20,.6) 0 1px,rgba(8,8,20,.1) 1px 2px)"></div><div class="a" style="left:27px;top:232px;width:856px;height:1px;background:repeating-linear-gradient(90deg,rgba(8,8,20,.3) 0 1px,rgba(8,8,20,.05) 1px 2px)"></div>
<div class="a" style="left:27px;top:249px;width:856px;height:1px;background:repeating-linear-gradient(90deg,rgba(8,8,20,.6) 0 1px,rgba(8,8,20,.1) 1px 2px)"></div><div class="a" style="left:27px;top:248px;width:856px;height:1px;background:repeating-linear-gradient(90deg,rgba(8,8,20,.3) 0 1px,rgba(8,8,20,.05) 1px 2px)"></div>
<div class="a" style="left:27px;top:265px;width:856px;height:1px;background:repeating-linear-gradient(90deg,rgba(8,8,20,.6) 0 1px,rgba(8,8,20,.1) 1px 2px)"></div><div class="a" style="left:27px;top:264px;width:856px;height:1px;background:repeating-linear-gradient(90deg,rgba(8,8,20,.3) 0 1px,rgba(8,8,20,.05) 1px 2px)"></div>
<div class="a" style="left:27px;top:281px;width:856px;height:1px;background:repeating-linear-gradient(90deg,rgba(8,8,20,.6) 0 1px,rgba(8,8,20,.1) 1px 2px)"></div><div class="a" style="left:27px;top:280px;width:856px;height:1px;background:repeating-linear-gradient(90deg,rgba(8,8,20,.3) 0 1px,rgba(8,8,20,.05) 1px 2px)"></div>
<div class="a" style="left:200px;top:138px;width:1px;height:143px;background:repeating-linear-gradient(180deg,rgba(8,8,20,.6) 0 1px,rgba(8,8,20,.1) 1px 2px)"></div><div class="a" style="left:201px;top:138px;width:1px;height:143px;background:repeating-linear-gradient(180deg,rgba(8,8,20,.25) 0 1px,rgba(8,8,20,.05) 1px 2px)"></div>
<div class="a" style="left:200px;top:122px;width:1px;height:16px;background:#0c0c12"></div><div class="a" style="left:201px;top:122px;width:1px;height:16px;background:rgba(12,12,18,.45)"></div>
<div class="a" style="left:277px;top:138px;width:1px;height:143px;background:repeating-linear-gradient(180deg,rgba(8,8,20,.6) 0 1px,rgba(8,8,20,.1) 1px 2px)"></div><div class="a" style="left:278px;top:138px;width:1px;height:143px;background:repeating-linear-gradient(180deg,rgba(8,8,20,.25) 0 1px,rgba(8,8,20,.05) 1px 2px)"></div>
<div class="a" style="left:277px;top:122px;width:1px;height:16px;background:#0c0c12"></div><div class="a" style="left:278px;top:122px;width:1px;height:16px;background:rgba(12,12,18,.45)"></div>
<div class="a" style="left:354px;top:138px;width:1px;height:143px;background:repeating-linear-gradient(180deg,rgba(8,8,20,.6) 0 1px,rgba(8,8,20,.1) 1px 2px)"></div><div class="a" style="left:355px;top:138px;width:1px;height:143px;background:repeating-linear-gradient(180deg,rgba(8,8,20,.25) 0 1px,rgba(8,8,20,.05) 1px 2px)"></div>
<div class="a" style="left:354px;top:122px;width:1px;height:16px;background:#0c0c12"></div><div class="a" style="left:355px;top:122px;width:1px;height:16px;background:rgba(12,12,18,.45)"></div>
<div class="a" style="left:430px;top:138px;width:1px;height:143px;background:repeating-linear-gradient(180deg,rgba(8,8,20,.6) 0 1px,rgba(8,8,20,.1) 1px 2px)"></div><div class="a" style="left:431px;top:138px;width:1px;height:143px;background:repeating-linear-gradient(180deg,rgba(8,8,20,.25) 0 1px,rgba(8,8,20,.05) 1px 2px)"></div>
<div class="a" style="left:430px;top:122px;width:1px;height:16px;background:#0c0c12"></div><div class="a" style="left:431px;top:122px;width:1px;height:16px;background:rgba(12,12,18,.45)"></div>
<div class="a" style="left:507px;top:138px;width:1px;height:143px;background:repeating-linear-gradient(180deg,rgba(8,8,20,.6) 0 1px,rgba(8,8,20,.1) 1px 2px)"></div><div class="a" style="left:508px;top:138px;width:1px;height:143px;background:repeating-linear-gradient(180deg,rgba(8,8,20,.25) 0 1px,rgba(8,8,20,.05) 1px 2px)"></div>
<div class="a" style="left:507px;top:122px;width:1px;height:16px;background:#0c0c12"></div><div class="a" style="left:508px;top:122px;width:1px;height:16px;background:rgba(12,12,18,.45)"></div>
<div class="a" style="left:584px;top:138px;width:1px;height:143px;background:repeating-linear-gradient(180deg,rgba(8,8,20,.6) 0 1px,rgba(8,8,20,.1) 1px 2px)"></div><div class="a" style="left:585px;top:138px;width:1px;height:143px;background:repeating-linear-gradient(180deg,rgba(8,8,20,.25) 0 1px,rgba(8,8,20,.05) 1px 2px)"></div>
<div class="a" style="left:584px;top:122px;width:1px;height:16px;background:#0c0c12"></div><div class="a" style="left:585px;top:122px;width:1px;height:16px;background:rgba(12,12,18,.45)"></div>
<div class="a" style="left:661px;top:138px;width:1px;height:143px;background:repeating-linear-gradient(180deg,rgba(8,8,20,.6) 0 1px,rgba(8,8,20,.1) 1px 2px)"></div><div class="a" style="left:662px;top:138px;width:1px;height:143px;background:repeating-linear-gradient(180deg,rgba(8,8,20,.25) 0 1px,rgba(8,8,20,.05) 1px 2px)"></div>
<div class="a" style="left:661px;top:122px;width:1px;height:16px;background:#0c0c12"></div><div class="a" style="left:662px;top:122px;width:1px;height:16px;background:rgba(12,12,18,.45)"></div>
<div class="a" style="left:738px;top:138px;width:1px;height:143px;background:repeating-linear-gradient(180deg,rgba(8,8,20,.6) 0 1px,rgba(8,8,20,.1) 1px 2px)"></div><div class="a" style="left:739px;top:138px;width:1px;height:143px;background:repeating-linear-gradient(180deg,rgba(8,8,20,.25) 0 1px,rgba(8,8,20,.05) 1px 2px)"></div>
<div class="a" style="left:738px;top:122px;width:1px;height:16px;background:#0c0c12"></div><div class="a" style="left:739px;top:122px;width:1px;height:16px;background:rgba(12,12,18,.45)"></div>
<div class="a" style="left:882px;top:138px;width:1px;height:143px;background:repeating-linear-gradient(180deg,rgba(8,8,20,.6) 0 1px,rgba(8,8,20,.1) 1px 2px)"></div><div class="a" style="left:883px;top:138px;width:1px;height:143px;background:repeating-linear-gradient(180deg,rgba(8,8,20,.25) 0 1px,rgba(8,8,20,.05) 1px 2px)"></div>
<div class="a" style="left:882px;top:122px;width:1px;height:16px;background:#0c0c12"></div><div class="a" style="left:883px;top:122px;width:1px;height:16px;background:rgba(12,12,18,.45)"></div>
<div class="cell ar" style="left:27px;top:122px;width:174px;font-size:10.5px;height:18px;line-height:18px">الاسم</div>
<div class="cell ar" style="left:201px;top:122px;width:77px;font-size:10.5px;height:18px;line-height:18px">تاريخ</div>
<div class="cell ar" style="left:278px;top:122px;width:77px;font-size:10.5px;height:18px;line-height:18px">اسلامية</div>
<div class="cell ar" style="left:355px;top:122px;width:76px;font-size:10.5px;height:18px;line-height:18px">علوم</div>
<div class="cell ar" style="left:431px;top:122px;width:77px;font-size:10.5px;height:18px;line-height:18px">لغة عربية</div>
<div class="cell ar" style="left:508px;top:122px;width:77px;font-size:10.5px;height:18px;line-height:18px">جغرافية</div>
<div class="cell ar" style="left:585px;top:122px;width:77px;font-size:10.5px;height:18px;line-height:18px">المجموع</div>
<div class="cell ar" style="left:662px;top:122px;width:77px;font-size:10.5px;height:18px;line-height:18px">التقييم</div>
<div class="cell ar" style="left:739px;top:122px;width:144px;font-size:10.5px;height:18px;line-height:18px">عدد المواد المتقدم لها</div>
<div class="cell ar" style="left:27px;top:138px;width:174px;padding-top:1px;font-size:10.8px;height:19px;line-height:17px;word-spacing:-0.52px;"><span style="display:inline-block;transform:scale(1.04,1.22);transform-origin:50% 82%">خالد محمد العبدالله</span></div>
<div class="cell num" style="left:201px;top:139px;width:77px">15</div>
<div class="cell num" style="left:278px;top:139px;width:77px">18</div>
<div class="cell num" style="left:355px;top:139px;width:76px">22</div>
<div class="cell num" style="left:431px;top:139px;width:77px">14</div>
<div class="cell num" style="left:508px;top:139px;width:77px">16</div>
<div class="cell num" style="left:585px;top:139px;width:77px">85</div>
<div class="cell ar" style="left:662px;top:138px;width:77px;padding-top:1px;font-size:10.8px;height:19px;line-height:17px;"><span style="display:inline-block;transform:scale(1.04,1.22);transform-origin:50% 82%">ناجح</span></div>
<div class="cell ar" style="left:27px;top:154px;width:174px;padding-top:1px;font-size:10.8px;height:19px;line-height:17px;word-spacing:-2.23px;"><span style="display:inline-block;transform:scale(1.04,1.22);transform-origin:50% 82%">وليد يوسف الحسين</span></div>
<div class="cell num" style="left:201px;top:155px;width:77px">25</div>
<div class="cell num" style="left:278px;top:155px;width:77px">16</div>
<div class="cell num" style="left:355px;top:155px;width:76px">24</div>
<div class="cell num" style="left:431px;top:155px;width:77px">15</div>
<div class="cell num" style="left:508px;top:155px;width:77px">25</div>
<div class="cell num" style="left:585px;top:155px;width:77px">105</div>
<div class="cell ar" style="left:662px;top:154px;width:77px;padding-top:1px;font-size:10.8px;height:19px;line-height:17px;"><span style="display:inline-block;transform:scale(1.04,1.22);transform-origin:50% 82%">ناجح</span></div>
<div class="cell ar" style="left:27px;top:169px;width:174px;padding-top:1px;font-size:10.8px;height:19px;line-height:17px;word-spacing:1.26px;"><span style="display:inline-block;transform:scale(1.04,1.22);transform-origin:50% 82%">ماجد بن الحسين</span></div>
<div class="cell num" style="left:201px;top:170px;width:77px">12</div>
<div class="cell num" style="left:278px;top:170px;width:77px">10</div>
<div class="cell num" style="left:355px;top:170px;width:76px">23</div>
<div class="cell ar" style="left:431px;top:169px;width:77px;padding-top:1px;font-size:10.8px;height:19px;line-height:17px;"><span style="display:inline-block;transform:scale(1.04,1.22);transform-origin:50% 82%">لم يتقدم للاختبار</span></div>
<div class="cell num" style="left:508px;top:170px;width:77px">16</div>
<div class="cell num" style="left:585px;top:170px;width:77px">65</div>
<div class="cell ar" style="left:662px;top:169px;width:77px;padding-top:1px;font-size:10.8px;height:19px;line-height:17px;"><span style="display:inline-block;transform:scale(1.04,1.22);transform-origin:50% 82%">راسب</span></div>
<div class="cell ar" style="left:27px;top:185px;width:174px;padding-top:1px;font-size:10.8px;height:19px;line-height:17px;word-spacing:2.27px;"><span style="display:inline-block;transform:scale(1.04,1.22);transform-origin:50% 82%">احمد محمد يونس</span></div>
<div class="cell num" style="left:201px;top:186px;width:77px">20</div>
<div class="cell num" style="left:278px;top:186px;width:77px">19</div>
<div class="cell num" style="left:355px;top:186px;width:76px">21</div>
<div class="cell num" style="left:431px;top:186px;width:77px">18</div>
<div class="cell num" style="left:508px;top:186px;width:77px">20</div>
<div class="cell num" style="left:585px;top:186px;width:77px">98</div>
<div class="cell ar" style="left:662px;top:185px;width:77px;padding-top:1px;font-size:10.8px;height:19px;line-height:17px;"><span style="display:inline-block;transform:scale(1.04,1.22);transform-origin:50% 82%">ناجح</span></div>
<div class="cell ar" style="left:27px;top:201px;width:174px;padding-top:1px;font-size:10.8px;height:19px;line-height:17px;word-spacing:6.50px;"><span style="display:inline-block;transform:scale(1.04,1.22);transform-origin:50% 82%">سعيد علي جابر</span></div>
<div class="cell num" style="left:201px;top:202px;width:77px">10</div>
<div class="cell num" style="left:278px;top:202px;width:77px">12</div>
<div class="cell num" style="left:355px;top:202px;width:76px">14</div>
<div class="cell num" style="left:431px;top:202px;width:77px">13</div>
<div class="cell num" style="left:508px;top:202px;width:77px">15</div>
<div class="cell num" style="left:585px;top:202px;width:77px">64</div>
<div class="cell ar" style="left:662px;top:201px;width:77px;padding-top:1px;font-size:10.8px;height:19px;line-height:17px;"><span style="display:inline-block;transform:scale(1.04,1.22);transform-origin:50% 82%">راسب</span></div>
<div class="cell ar" style="left:27px;top:217px;width:174px;padding-top:1px;font-size:10.8px;height:19px;line-height:17px;word-spacing:-5.90px;"><span style="display:inline-block;transform:scale(1.04,1.22);transform-origin:50% 82%">محمود حسن علي</span></div>
<div class="cell num" style="left:201px;top:218px;width:77px">14</div>
<div class="cell num" style="left:278px;top:218px;width:77px">13</div>
<div class="cell num" style="left:355px;top:218px;width:76px">15</div>
<div class="cell num" style="left:431px;top:218px;width:77px">14</div>
<div class="cell num" style="left:508px;top:218px;width:77px">14</div>
<div class="cell num" style="left:585px;top:218px;width:77px">70</div>
<div class="cell ar" style="left:662px;top:217px;width:77px;padding-top:1px;font-size:10.8px;height:19px;line-height:17px;"><span style="display:inline-block;transform:scale(1.04,1.22);transform-origin:50% 82%">راسب</span></div>
<div class="cell ar" style="left:27px;top:233px;width:174px;padding-top:1px;font-size:10.8px;height:19px;line-height:17px;word-spacing:0.93px;"><span style="display:inline-block;transform:scale(1.04,1.22);transform-origin:50% 82%">ياسر احمد محمود</span></div>
<div class="cell num" style="left:201px;top:234px;width:77px">18</div>
<div class="cell num" style="left:278px;top:234px;width:77px">17</div>
<div class="cell num" style="left:355px;top:234px;width:76px">19</div>
<div class="cell num" style="left:431px;top:234px;width:77px">18</div>
<div class="cell num" style="left:508px;top:234px;width:77px">19</div>
<div class="cell num" style="left:585px;top:234px;width:77px">91</div>
<div class="cell ar" style="left:662px;top:233px;width:77px;padding-top:1px;font-size:10.8px;height:19px;line-height:17px;"><span style="display:inline-block;transform:scale(1.04,1.22);transform-origin:50% 82%">ناجح</span></div>
<div class="cell ar" style="left:27px;top:249px;width:174px;padding-top:1px;font-size:10.8px;height:19px;line-height:17px;word-spacing:4.55px;"><span style="display:inline-block;transform:scale(1.04,1.22);transform-origin:50% 82%">خالد سعيد مقبول</span></div>
<div class="cell num" style="left:201px;top:250px;width:77px">19</div>
<div class="cell num" style="left:278px;top:250px;width:77px">18</div>
<div class="cell num" style="left:355px;top:250px;width:76px">18</div>
<div class="cell num" style="left:431px;top:250px;width:77px">18</div>
<div class="cell num" style="left:508px;top:250px;width:77px">19</div>
<div class="cell num" style="left:585px;top:250px;width:77px">92</div>
<div class="cell ar" style="left:662px;top:249px;width:77px;padding-top:1px;font-size:10.8px;height:19px;line-height:17px;"><span style="display:inline-block;transform:scale(1.04,1.22);transform-origin:50% 82%">ناجح</span></div>
<div class="cell ar" style="left:27px;top:265px;width:174px;padding-top:1px;font-size:10.8px;height:19px;line-height:17px;word-spacing:-1.41px;"><span style="display:inline-block;transform:scale(1.04,1.22);transform-origin:50% 82%">يوسف محمد عامر</span></div>
<div class="cell num" style="left:201px;top:266px;width:77px">11</div>
<div class="cell num" style="left:278px;top:266px;width:77px">12</div>
<div class="cell num" style="left:355px;top:266px;width:76px">10</div>
<div class="cell num" style="left:431px;top:266px;width:77px">12</div>
<div class="cell num" style="left:508px;top:266px;width:77px">12</div>
<div class="cell num" style="left:585px;top:266px;width:77px">57</div>
<div class="cell ar" style="left:662px;top:265px;width:77px;padding-top:1px;font-size:10.8px;height:19px;line-height:17px;"><span style="display:inline-block;transform:scale(1.04,1.22);transform-origin:50% 82%">راسب</span></div>
<div class="a" style="left:738px;top:137px;width:146px;height:18px;border:2px solid #16161e"></div>
<div class="a" style="left:881px;top:152px;width:4px;height:4px;background:#111"></div>
<div class="a" style="left:1017px;top:107px;width:10px;height:444px;background:#525a5a"></div>
<div class="a" style="left:1019px;top:113px;width:7px;height:209px;border:1px solid #1d2020;border-radius:4px;background:#444c4c"></div>
<div class="a" style="left:1018px;top:107px;width:9px;height:3px;background:#b4b8b8"></div>
<div class="a" style="left:0;top:551px;width:1017px;height:10px;background:#454d4d"></div>
<div class="a" style="left:585px;top:551px;width:185px;height:10px;background:#596161"></div>
<div class="a" style="left:770px;top:551px;width:247px;height:10px;background:#525a5a"></div>
<div class="a" style="left:3px;top:553px;width:500px;height:6px;border:1px solid #15181a;border-radius:3px;background:#434b4b"></div>
<div class="a" style="left:1014px;top:552px;width:3px;height:8px;background:#7d8585"></div><div class="a" style="left:1015px;top:553px;width:1px;height:6px;background:#111"></div>
<div class="a" style="left:0;top:561px;width:1027px;height:17px;background:#3a4141"></div>
<div class="a" style="left:770px;top:561px;width:247px;height:17px;background:#373e3e"></div>
<div class="a" style="left:1017px;top:551px;width:10px;height:27px;background:#3a4040"></div>
<svg class="a" style="left:8px;top:562px" width="84" height="14" viewBox="0 0 84 14"><g fill="#6f7878"><path d="M1 1.200h1.800v11.400H1zM8.200 1.200v11.400L2.800 7z"/><path d="M24.300 1.200v11.400l-6.500-5.700z"/><path d="M34 1.200v11.400l6.500-5.700z"/><path d="M56.200 1.200h1.800v11.400h-1.800zM50 1.200v11.400l6.200-5.700z"/></g><path d="M74.200 1.200v11.400M69 6.900h10.400" stroke="#f2f2f2" stroke-width="2"/></svg>
<div class="a" style="left:0;top:577px;width:1058px;height:16px;background:#353c3c;border-top:1px solid #5c6464"></div>
<div class="t" style="left:8px;top:578.82px;color:#444c4c;font-size:8.6px;letter-spacing:-0.40px;">Page 1 of 1</div>
<div class="t" style="left:1031px;top:578.33px;color:#414949;font-size:10px;letter-spacing:-1.39px;">100%</div>
<div class="a" style="left:950px;top:585px;width:70px;height:1px;background:#3d4444"></div><div class="a" style="left:975px;top:582px;width:6px;height:6px;border-radius:3px;background:#3f4747"></div>
<div class="a" style="left:0;top:592px;width:1058px;height:1px;background:#262b2b"></div>
<div class="a" style="left:0;top:593px;width:1058px;height:2px;background:#ffffff"></div>
<div class="a" style="left:591px;top:582px;width:7px;height:7px;background:#e9e3d8;border:1px solid #777"></div><div class="a" style="left:593px;top:584px;width:4px;height:4px;background:#e0661a"></div>
<div class="a" style="left:1027px;top:87px;width:31px;height:490px;background:#394040"></div>
<div class="a" style="left:1027px;top:87px;width:1px;height:490px;background:#6a7272"></div>
<div class="a" style="left:1031px;top:87px;width:1px;height:490px;background:#868e8e"></div>
<svg class="a" style="left:1036px;top:91px" width="16" height="16" viewBox="0 0 16 16"><g fill="#d8dada"><circle cx="8" cy="8" r="5.200"/><g id="gt"><rect x="6.600" y="0.500" width="2.800" height="15"/></g><rect x="0.500" y="6.600" width="15" height="2.800"/><rect x="6.600" y="0.500" width="2.800" height="15" transform="rotate(45 8 8)"/><rect x="6.600" y="0.500" width="2.800" height="15" transform="rotate(-45 8 8)"/></g><circle cx="8" cy="8" r="2.200" fill="#323838"/></svg>
<div class="a" style="left:1033px;top:111px;width:25px;height:1px;background:#454c4c"></div>
<div class="a" style="left:1034px;top:115px;width:22px;height:21px;border:1px solid #c8caca;border-radius:2px;background:#333a3a"></div>
<svg class="a" style="left:1038px;top:119px" width="15" height="14" viewBox="0 0 15 14"><rect x="0.500" y="1" width="14" height="11" fill="#e6e8ea"/><rect x="5" y="4.500" width="8" height="4" rx="2" fill="#2f7fd6"/><circle cx="11" cy="6.500" r="1.300" fill="#fff"/></svg>
<svg class="a" style="left:1037px;top:141px" width="17" height="17" viewBox="0 0 17 17"><path d="M2 12L6 1.500h1.500L11 10" stroke="#8d9393" stroke-width="1.600" fill="none"/><path d="M4 8h6" stroke="#8d9393" stroke-width="1.300"/><path d="M14.500 5l1.500 1.500-6 6.500-2.500 1 0.800-2.500z" fill="#d86a3a"/><path d="M7.500 14l1-2.500 1.500 1.500z" fill="#4a78c8"/></svg>
<svg class="a" style="left:1037px;top:165px" width="17" height="15" viewBox="0 0 17 15"><path d="M0.500 1.500h5.500l1.500 2h9v10.500H0.500z" fill="#3f8fd8"/><rect x="1.500" y="5" width="14" height="8" fill="#dfeaf4"/><path d="M1.500 13l4-4.500 3 3 2.500-2 4.500 3.500z" fill="#e8a23c"/></svg>
<svg class="a" style="left:1037px;top:187px" width="16" height="16" viewBox="0 0 16 16"><circle cx="8" cy="8" r="7" fill="#5a6068" stroke="#b9bcc4" stroke-width="1.400"/><path d="M11.500 4.500L9 9 4.500 11.500 7 7z" fill="#e04a3a"/><path d="M4.500 11.500L7 7l2 2z" fill="#e8e8e8"/></svg>
<div class="t" style="left:1039px;top:212px;color:#454c4c;font-weight:bold;font-size:11px">f<span style="font-size:8px">(x)</span></div>
<div class="a" style="left:77px;top:168px;width:10px;height:383px;background:linear-gradient(90deg,rgba(0,0,0,0),rgba(0,0,0,.16))"></div>
<div class="a" style="left:585px;top:168px;width:10px;height:383px;background:linear-gradient(90deg,rgba(0,0,0,.17),rgba(0,0,0,0))"></div>
<div class="a" style="left:87px;top:165px;width:498px;height:428px;background:#393f3f;border-left:1px solid #2a2f2f"></div>
<div class="a" style="left:87px;top:165px;width:498px;height:17px;background:rgba(75,74,76,0.9)"></div>
<div class="a" style="left:92px;top:170px;width:10px;height:8px;background:#ececf0;border-top:2px solid #6d8cc4;border-radius:1px"></div>
<div class="t" style="left:285px;top:167.49px;color:#ececec;font-size:11px;font-weight:bold;letter-spacing:0.10px;">Function Wizard</div>
<div class="a" style="left:556px;top:171px;width:6px;height:6px;border:1.5px solid #e6e6e6"></div>
<svg class="a" style="left:571px;top:170px" width="8" height="8" viewBox="0 0 8 8"><path d="M1.2 1.2L6.800 6.800M6.800 1.200L1.200 6.800" stroke="#f0f0f0" stroke-width="1.700"/></svg>
<div class="a" style="left:92px;top:206px;width:143px;height:372px;background:#3c4343;border-top:1px solid #343a3a"></div>
<div class="a" style="left:92px;top:187px;width:62px;height:20px;background:#3c4343;border:1px solid #343a3a;border-bottom:none"></div>
<div class="a" style="left:154px;top:188px;width:61px;height:18px;background:#373e3e;border:1px solid #31373b;border-left:none;border-bottom:none"></div>
<div class="t" style="left:100.5px;top:189.87px;color:#e9e9e9;font-size:9.9px;letter-spacing:0.19px;">Functions</div>
<div class="t" style="left:164.4px;top:189.87px;color:#848a8a;font-size:9.9px;letter-spacing:0.21px;">Structure</div>
<div class="t" style="left:96.8px;top:210.67px;color:#e4e4e4;font-size:9.9px;letter-spacing:-0.22px;">Search</div>
<div class="inp" style="left:96px;top:228px;width:136px;height:20px"></div>
<div class="t" style="left:100.5px;top:231.27px;color:#f0f0f0;font-size:9.9px;letter-spacing:0.17px;">count</div>
<div class="t" style="left:96.8px;top:253.07px;color:#e4e4e4;font-size:9.9px;letter-spacing:0.07px;">Category</div>
<div class="a" style="left:96px;top:270px;width:136px;height:19px;background:#2f3535;border:1px solid #2a2f2f;border-radius:2px"></div>
<div class="t" style="left:100.3px;top:272.67px;color:#ececec;font-size:9.9px;letter-spacing:-0.00px;">Spreadsheet</div>
<div class="dd" style="left:220px;top:278px;border-left-width:3.5px;border-right-width:3.5px;border-top-width:4px;border-top-color:#f0f0f0"></div>
<div class="t" style="left:97px;top:293.77px;color:#e4e4e4;font-size:9.9px;letter-spacing:0.14px;">Function</div>
<div class="a" style="left:97px;top:311px;width:125px;height:261px;background:#272727;border-right:1px dashed #6a7070;border-bottom:1px dashed #6a7070"></div>
<div class="a" style="left:222px;top:311px;width:9px;height:261px;background:#4b5353"></div>
<div class="a" style="left:223px;top:313px;width:6px;height:165px;border:1px solid #151818;border-radius:3px;background:#3c4343"></div>
<div class="a" style="left:96px;top:311px;width:125px;height:260px;overflow:hidden">
<div class="t" style="left:4.3px;top:2.94px;color:#e6e6e6;font-size:9.4px;letter-spacing:-0.53px;">ADDRESS</div>
<div class="t" style="left:4.3px;top:20.84px;color:#e6e6e6;font-size:9.4px;letter-spacing:-0.78px;">AREAS</div>
<div class="t" style="left:4.3px;top:38.64px;color:#e6e6e6;font-size:9.4px;letter-spacing:-0.49px;">CHOOSE</div>
<div class="t" style="left:4.3px;top:56.54px;color:#e6e6e6;font-size:9.4px;letter-spacing:0.01px;">COLUMN</div>
<div class="t" style="left:4.3px;top:74.34px;color:#e6e6e6;font-size:9.4px;letter-spacing:-0.07px;">COLUMNS</div>
<div class="t" style="left:4.3px;top:92.14px;color:#e6e6e6;font-size:9.4px;letter-spacing:-0.20px;">DDE</div>
<div class="t" style="left:4.3px;top:110.04px;color:#e6e6e6;font-size:9.4px;letter-spacing:-0.78px;">ERROR.TYPE</div>
<div class="t" style="left:4.3px;top:127.84px;color:#e6e6e6;font-size:9.4px;letter-spacing:-0.72px;">ERRORTYPE</div>
<div class="t" style="left:4.3px;top:145.74px;color:#e6e6e6;font-size:9.4px;letter-spacing:-0.28px;">GETPIVOTDATA</div>
<div class="t" style="left:4.3px;top:163.64px;color:#e6e6e6;font-size:9.4px;letter-spacing:-0.14px;">HLOOKUP</div>
<div class="t" style="left:4.3px;top:181.44px;color:#e6e6e6;font-size:9.4px;letter-spacing:-0.21px;">HYPERLINK</div>
<div class="t" style="left:4.3px;top:199.24px;color:#e6e6e6;font-size:9.4px;letter-spacing:0.01px;">INDEX</div>
<div class="t" style="left:4.3px;top:217.14px;color:#e6e6e6;font-size:9.4px;letter-spacing:-0.16px;">INDIRECT</div>
<div class="t" style="left:4.3px;top:234.94px;color:#e6e6e6;font-size:9.4px;letter-spacing:-0.23px;">LOOKUP</div>
<div class="t" style="left:4.3px;top:252.84px;color:#e6e6e6;font-size:9.4px;letter-spacing:-0.27px;">MATCH</div>
</div>
<div class="t" style="left:240.4px;top:189.97px;color:#ececec;font-size:9.6px;letter-spacing:-0.30px;">COUNT</div>
<div class="t" style="left:398.4px;top:189.87px;color:#e4e4e4;font-size:9.9px;letter-spacing:0.21px;">Function result</div>
<div class="inp" style="left:474px;top:187px;width:106px;height:20px"></div>
<div class="t" style="left:478px;top:189.87px;color:#ececec;font-size:9.9px;">6</div>
<div class="t" style="left:244.4px;top:214.97px;color:#e4e4e4;font-size:9.9px;letter-spacing:0.21px;">Counts how many numbers are in the list of arguments.</div>
<div class="t" style="left:244px;top:277.87px;color:#e4e4e4;font-size:9.9px;letter-spacing:0.10px;">Value 1 (required)</div>
<div class="t" style="left:244px;top:299.57px;color:#e4e4e4;font-size:9.9px;letter-spacing:0.15px;">Value 1, value 2, ... are arguments containing different data types but</div>
<div class="t" style="left:244px;top:313.57px;color:#e4e4e4;font-size:9.9px;letter-spacing:0.21px;">where only numbers are counted.</div>
<div class="a" style="left:244px;top:360px;width:332px;height:98px;background:#3c4343;border:1px solid #2c3131;border-bottom:1px dashed #7a8080"></div>
<div class="a" style="left:565px;top:361px;width:10px;height:96px;background:#4b5353;border-left:1px dashed #6a7070"></div>
<div class="a" style="left:568px;top:362px;width:6px;height:28px;border:1px solid #151818;border-radius:3px;background:#3c4343"></div>
<div class="a" style="left:244px;top:361px;width:321px;height:96px;overflow:hidden">
<div class="t" style="left:130.6px;top:6.57px;color:#f4f4f4;font-size:9.9px;font-weight:bold;letter-spacing:-0.01px;">Value 1</div>
<div class="a" style="left:169px;top:3.4px;width:17px;height:20px;background:#394040;border:1px solid #343a3a;border-radius:2px"></div>
<div class="t" style="left:173px;top:6.4px;color:#4a5050;font-weight:bold;font-size:10px">f<span style="font-size:7px">x</span></div>
<div class="inp" style="left:190px;top:3.4px;width:106px;height:20px"></div>
<div class="a" style="left:299px;top:3.4px;width:17px;height:20px;background:#394040;border:1px solid #343a3a;border-radius:2px"></div>
<svg class="a" style="left:302px;top:7.4px" width="12" height="12" viewBox="0 0 12 12"><rect x="1" y="1" width="9" height="5" fill="#f2f2f2"/><rect x="1" y="3" width="9" height="1" fill="#bdbdbd"/><path d="M7.500 5.500L10.500 8.500H8.500V11H6.500V8.500H4.500z" fill="#a45cd6"/></svg>
<div class="a" style="left:193px;top:6.4px;width:27px;height:13px;background:#185da8"></div>
<div class="t" style="left:193.8px;top:6.57px;color:#fff;font-size:9.9px;letter-spacing:-0.50px;">B2:G2</div>
<div class="t" style="left:131.5px;top:30.27px;color:#e4e4e4;font-size:9.9px;letter-spacing:-0.04px;">Value 2</div>
<div class="a" style="left:169px;top:27.1px;width:17px;height:20px;background:#394040;border:1px solid #343a3a;border-radius:2px"></div>
<div class="t" style="left:173px;top:30.1px;color:#4a5050;font-weight:bold;font-size:10px">f<span style="font-size:7px">x</span></div>
<div class="inp" style="left:190px;top:27.1px;width:106px;height:20px"></div>
<div class="a" style="left:299px;top:27.1px;width:17px;height:20px;background:#394040;border:1px solid #343a3a;border-radius:2px"></div>
<svg class="a" style="left:302px;top:31.1px" width="12" height="12" viewBox="0 0 12 12"><rect x="1" y="1" width="9" height="5" fill="#f2f2f2"/><rect x="1" y="3" width="9" height="1" fill="#bdbdbd"/><path d="M7.500 5.500L10.500 8.500H8.500V11H6.500V8.500H4.500z" fill="#a45cd6"/></svg>
<div class="t" style="left:131.5px;top:53.97px;color:#e4e4e4;font-size:9.9px;letter-spacing:-0.04px;">Value 3</div>
<div class="a" style="left:169px;top:50.8px;width:17px;height:20px;background:#394040;border:1px solid #343a3a;border-radius:2px"></div>
<div class="t" style="left:173px;top:53.8px;color:#4a5050;font-weight:bold;font-size:10px">f<span style="font-size:7px">x</span></div>
<div class="inp" style="left:190px;top:50.8px;width:106px;height:20px"></div>
<div class="a" style="left:299px;top:50.8px;width:17px;height:20px;background:#394040;border:1px solid #343a3a;border-radius:2px"></div>
<svg class="a" style="left:302px;top:54.8px" width="12" height="12" viewBox="0 0 12 12"><rect x="1" y="1" width="9" height="5" fill="#f2f2f2"/><rect x="1" y="3" width="9" height="1" fill="#bdbdbd"/><path d="M7.500 5.500L10.500 8.500H8.500V11H6.500V8.500H4.500z" fill="#a45cd6"/></svg>
<div class="t" style="left:131.5px;top:77.67px;color:#e4e4e4;font-size:9.9px;letter-spacing:-0.04px;">Value 4</div>
<div class="a" style="left:169px;top:74.5px;width:17px;height:20px;background:#394040;border:1px solid #343a3a;border-radius:2px"></div>
<div class="t" style="left:173px;top:77.5px;color:#4a5050;font-weight:bold;font-size:10px">f<span style="font-size:7px">x</span></div>
<div class="inp" style="left:190px;top:74.5px;width:106px;height:20px"></div>
<div class="a" style="left:299px;top:74.5px;width:17px;height:20px;background:#394040;border:1px solid #343a3a;border-radius:2px"></div>
<svg class="a" style="left:302px;top:78.5px" width="12" height="12" viewBox="0 0 12 12"><rect x="1" y="1" width="9" height="5" fill="#f2f2f2"/><rect x="1" y="3" width="9" height="1" fill="#bdbdbd"/><path d="M7.500 5.500L10.500 8.500H8.500V11H6.500V8.500H4.500z" fill="#a45cd6"/></svg>
</div>
<div class="a" style="left:374px;top:355px;width:193px;height:97px;border:1px solid #1f8a3d"></div>
<div class="t" style="left:240.5px;top:493.87px;color:#e4e4e4;font-size:9.9px;letter-spacing:0.25px;">Formula</div>
<div class="t" style="left:438.7px;top:490.87px;color:#e4e4e4;font-size:9.9px;letter-spacing:-0.12px;">Result</div>
<div class="inp" style="left:474px;top:488px;width:106px;height:20px"></div>
<div class="t" style="left:478px;top:490.87px;color:#ececec;font-size:9.9px;">6</div>
<div class="a" style="left:240px;top:512px;width:340px;height:64px;background:#272727;border:1px solid #2d3232"></div>
<div class="a" style="left:570px;top:513px;width:9px;height:62px;background:#3c4343"></div>
<div class="a" style="left:571px;top:514px;width:7px;height:60px;border:1px solid #111414;border-radius:3px;background:#3c4343"></div>
<div class="t" style="left:241px;top:513.04px;color:#ececec;font-size:9.4px;letter-spacing:-0.05px;">=COUNT(B2:G2)</div>
<div class="a" style="left:155px;top:588px;width:55px;height:5px;background:#3c4343;border:1px solid #474e4e;border-bottom:none;border-radius:2px 2px 0 0"></div>
<div class="a" style="left:344px;top:588px;width:55px;height:5px;background:#3c4343;border:1px solid #474e4e;border-bottom:none;border-radius:2px 2px 0 0"></div>
<div class="a" style="left:403px;top:588px;width:55px;height:5px;background:#3c4343;border:1px solid #474e4e;border-bottom:none;border-radius:2px 2px 0 0"></div>
<div class="a" style="left:462px;top:588px;width:55px;height:5px;background:#3c4343;border:1px solid #474e4e;border-bottom:none;border-radius:2px 2px 0 0"></div>
<div class="a" style="left:520px;top:588px;width:55px;height:5px;background:#3c4343;border:1px solid #474e4e;border-bottom:none;border-radius:2px 2px 0 0"></div>
</body></html>
